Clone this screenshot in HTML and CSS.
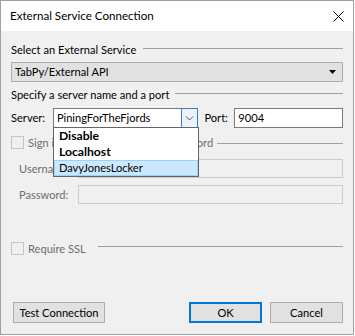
FILE: index.html
```html
<!DOCTYPE html>
<html>
<head>
<meta charset="utf-8">
<link rel="stylesheet" href="styles.css">
</head>
<body>
<div class="window">
  <div class="titlebar">
    <span class="title">External Service Connection</span>
    <svg class="close" width="11" height="11" viewBox="0 0 11 11"><path d="M0.5 0.5 L10.5 10.5 M10.5 0.5 L0.5 10.5" stroke="#000" stroke-width="1" fill="none"/></svg>
  </div>
  <div class="content">
    <div class="group-head head1"><span class="label">Select an External Service</span><span class="rule"></span></div>
    <div class="combo">
      <span class="value">TabPy/External API</span>
      <svg class="tri" width="7" height="4" viewBox="0 0 7 4"><path d="M0 0 H7 L3.5 4 Z" fill="#000"/></svg>
    </div>
    <div class="group-head head2"><span class="label">Specify a server name and a port</span><span class="rule"></span></div>
    <div class="server-row">
      <span class="label server-label">Server:</span>
      <div class="server-combo">
        <span class="value">PiningForTheFjords</span>
        <span class="drop-btn"><svg width="9" height="5" viewBox="0 0 9 5"><path d="M1 0.5 L4.5 4 L8 0.5" stroke="#555" stroke-width="1" fill="none"/></svg></span>
        <ul class="list">
          <li class="bold">Disable</li>
          <li class="bold">Localhost</li>
          <li class="selected">DavyJonesLocker</li>
        </ul>
      </div>
      <span class="label port-label">Port:</span>
      <div class="input port">9004</div>
    </div>
    <div class="check-head disabled sign-in"><span class="box"></span><span class="label">Sign in with a username and password</span><span class="rule"></span></div>
    <div class="field-row user-row"><span class="label">Username:</span><div class="input off"></div></div>
    <div class="field-row pass-row"><span class="label">Password:</span><div class="input off"></div></div>
    <div class="check-head disabled ssl"><span class="box"></span><span class="label">Require SSL</span><span class="rule"></span></div>
    <div class="buttons">
      <button class="btn test">Test Connection</button>
      <span class="grow"></span>
      <button class="btn ok">OK</button>
      <button class="btn cancel">Cancel</button>
    </div>
  </div>
</div>
</body>
</html>
```
FILE: styles.css
```css
html, body {
  margin: 0;
  padding: 0;
  background: #ffffff;
}
body {
  width: 355px;
  height: 336px;
  overflow: hidden;
  font-family: Lato, "Liberation Sans", sans-serif;
  font-size: 11.1px;
  color: #000;
}
.window {
  width: 354px;
  height: 335px;
  box-sizing: border-box;
  border: 1px solid #a0a0a0;
  background: #f0f0f0;
  display: flex;
  flex-direction: column;
}
.titlebar {
  height: 30px;
  background: #fff;
  display: flex;
  align-items: center;
  padding-left: 9px;
  position: relative;
}
.title {
  font-size: 11.6px;
  line-height: 16px;
}
.close {
  position: absolute;
  left: 332px;
  top: 10px;
}
.content {
  padding: 0 10px;
  display: flex;
  flex-direction: column;
  flex: 1;
}
.label {
  line-height: 16px;
  white-space: nowrap;
}
.group-head {
  display: flex;
  height: 16px;
}
.group-head .rule, .check-head .rule {
  flex: 1;
  height: 1px;
  background: #a0a0a0;
  margin-top: 6px;
  margin-left: 7px;
}
.head1 { margin-top: 11px; }
.head2 { margin-top: 5px; }
.head2 .rule { margin-left: 6px; }
.combo {
  margin-top: 4px;
  height: 20px;
  box-sizing: border-box;
  border: 1px solid #adadad;
  background: #e1e1e1;
  display: flex;
  align-items: center;
  padding: 0 6px 0 3px;
}
.combo .value { flex: 1; line-height: 16px; }
.server-row {
  margin-top: 5px;
  display: flex;
  height: 20px;
  align-items: center;
}
.server-label { width: 42px; }
.server-combo {
  position: relative;
  width: 146px;
  height: 20px;
  box-sizing: border-box;
  border: 1px solid #7a7a7a;
  background: #fff;
  display: flex;
  align-items: center;
  padding-left: 3px;
}
.server-combo .value { flex: 1; line-height: 16px; }
.drop-btn {
  width: 17px;
  height: 20px;
  margin: -1px -1px -1px 0;
  box-sizing: border-box;
  border: 1px solid #3f7fb5;
  background: #eaf2fa;
  display: flex;
  align-items: center;
  justify-content: center;
}
.list {
  position: absolute;
  left: -1px;
  top: 18px;
  width: 146px;
  margin: 0;
  padding: 0;
  list-style: none;
  box-sizing: border-box;
  border: 1px solid #646464;
  background: #fff;
  z-index: 2;
}
.list li {
  height: 16px;
  line-height: 16px;
  padding-left: 5px;
  box-sizing: border-box;
}
.list li.bold { font-weight: bold; font-size: 12.2px; }
.list li.selected {
  background: #cce8ff;
  border: 1px solid #99d1ff;
  line-height: 14px;
  padding-left: 4px;
}
.port-label { margin-left: 6px; width: 30px; }
.input {
  height: 20px;
  box-sizing: border-box;
  border: 1px solid #7a7a7a;
  background: #fff;
  padding-left: 3px;
  line-height: 18px;
}
.port { width: 109px; }
.check-head {
  display: flex;
  height: 16px;
  align-items: flex-start;
}
.check-head .box {
  width: 13px;
  height: 13px;
  box-sizing: border-box;
  border: 1px solid #c5c5c5;
  margin-top: 1px;
  margin-right: 4px;
}
.sign-in .rule { margin-top: 8px; margin-left: 4px; }
.disabled .label, .field-row .label { color: #6d6d6d; }
.sign-in { margin-top: 7px; }
.ssl { margin-top: 37px; }
.ssl .rule { margin-top: 5px; margin-left: 12px; }
.field-row {
  display: flex;
  align-items: center;
  height: 19px;
  padding-left: 8px;
}
.field-row .label { width: 59px; }
.field-row .input.off {
  flex: 1;
  height: 19px;
  border-color: #cccccc;
  background: #f0f0f0;
}
.user-row { margin-top: 8px; }
.pass-row { margin-top: 7px; }
.buttons {
  margin-top: 45px;
  display: flex;
  padding-left: 2px;
}
.grow { flex: 1; }
.btn {
  font-family: Lato, "Liberation Sans", sans-serif;
  font-size: 11.1px;
  height: 21px;
  box-sizing: border-box;
  border: 1px solid #adadad;
  background: #e1e1e1;
  color: #000;
  padding: 0;
  line-height: 18px;
}
.test { width: 92px; }
.ok { width: 73px; border: 2px solid #0078d7; }
.cancel { width: 73px; margin-left: 8px; }
```
